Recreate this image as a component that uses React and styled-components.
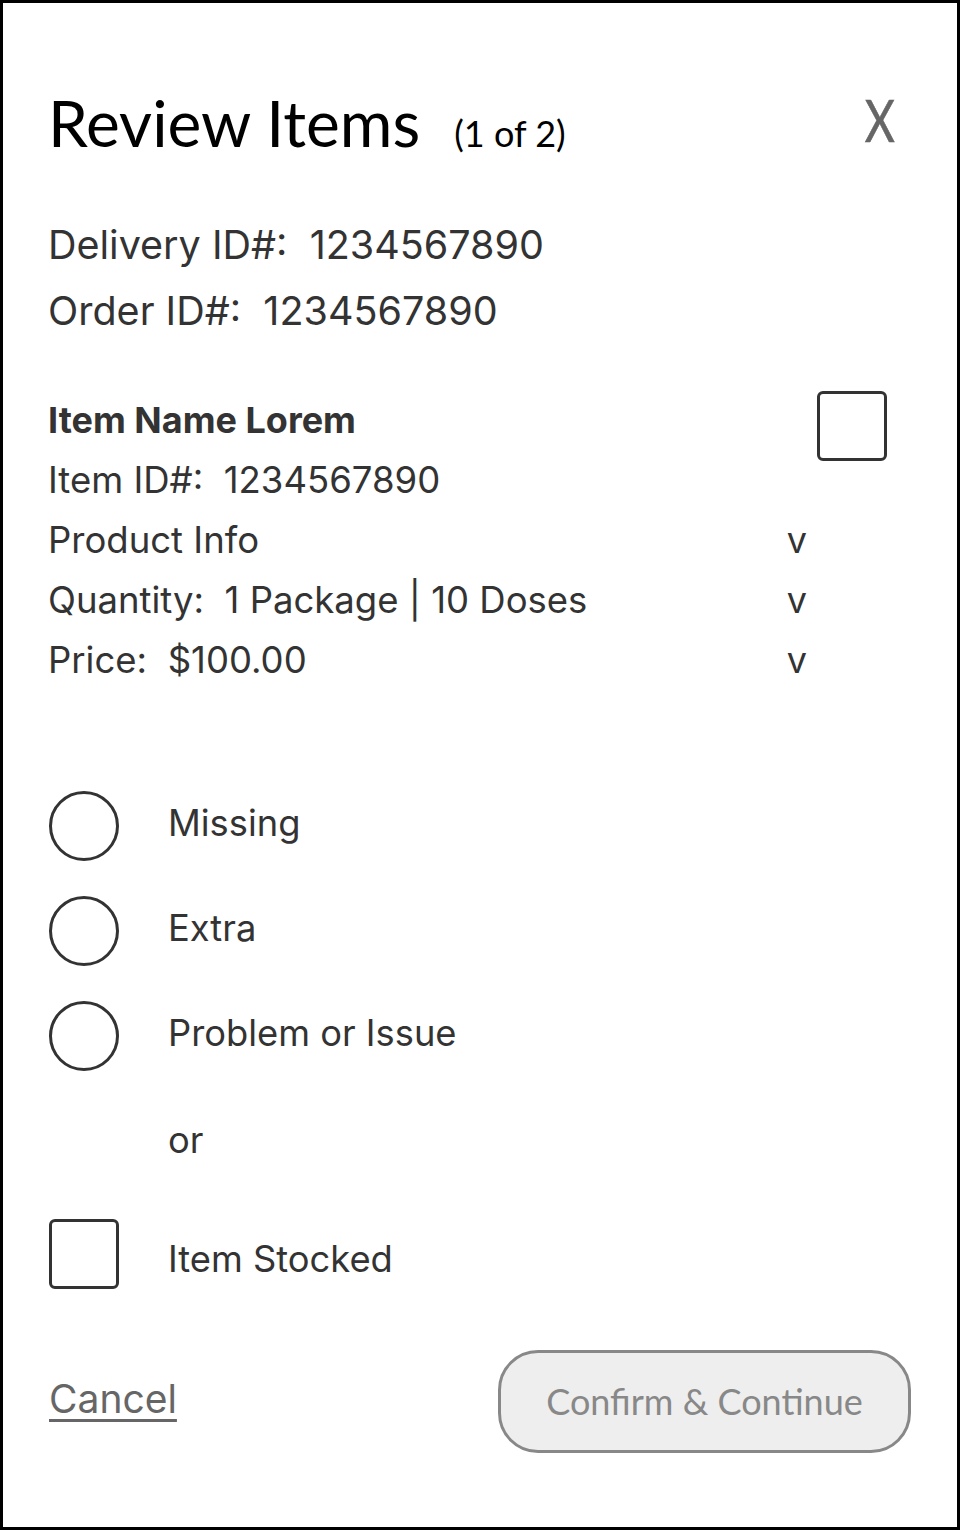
import React from "react";
import styled, { createGlobalStyle } from "styled-components";

const details = [
	{ label: "Item ID#:  1234567890" },
	{ label: "Product Info", toggle: true },
	{ label: "Quantity:  1 Package | 10 Doses", toggle: true },
	{ label: "Price:  $100.00", toggle: true },
];

const options = ["Missing", "Extra", "Problem or Issue"];

export default function App() {
	return (
		<>
			<GlobalStyle />
			<Page>
				<Header>
					<TitleGroup>
						<Title>Review Items</Title>
						<Counter>(1 of 2)</Counter>
					</TitleGroup>
					<Close>X</Close>
				</Header>

				<IdList>
					<IdLine>Delivery ID#:  1234567890</IdLine>
					<IdLine>Order ID#:  1234567890</IdLine>
				</IdList>

				<ItemSection>
					<DetailList>
						<DetailRow>
							<ItemName>Item Name Lorem</ItemName>
						</DetailRow>
						{details.map((d) => (
							<DetailRow key={d.label}>
								<span>{d.label}</span>
								{d.toggle && <Chevron>v</Chevron>}
							</DetailRow>
						))}
					</DetailList>
					<Checkbox $top />
				</ItemSection>

				<OptionList>
					{options.map((o) => (
						<OptionRow key={o}>
							<Radio />
							<OptionLabel $shift={-3}>{o}</OptionLabel>
						</OptionRow>
					))}
					<OrRow>
						<OptionLabel>or</OptionLabel>
					</OrRow>
					<OptionRow>
						<Checkbox />
						<OptionLabel $shift={5}>Item Stocked</OptionLabel>
					</OptionRow>
				</OptionList>

				<Footer>
					<CancelLink>Cancel</CancelLink>
					<ConfirmButton>Confirm &amp; Continue</ConfirmButton>
				</Footer>
			</Page>
		</>
	);
}

const GlobalStyle = createGlobalStyle`
	* {
		box-sizing: border-box;
	}
	body {
		margin: 0;
		background: #fff;
	}
`;

const Page = styled.div`
	width: 960px;
	height: 1530px;
	border: 3px solid #000;
	padding: 90px 46px 0 46px;
	display: flex;
	flex-direction: column;
	font-family: Inter, "Noto Sans", sans-serif;
	color: #333;
`;

const Header = styled.div`
	display: flex;
	justify-content: space-between;
	align-items: flex-start;
`;
const TitleGroup = styled.div`
	display: flex;
	align-items: baseline;
	font-family: Lato, "Liberation Sans", sans-serif;
	color: #000;
`;
const Title = styled.h1`
	margin: 0 0 0 -1px;
	font-size: 64px;
	font-weight: 400;
	line-height: 60px;
`;
const Counter = styled.span`
	font-size: 36px;
	margin-left: 34px;
`;
const Close = styled.span`
	font-family: Lato, "Liberation Sans", sans-serif;
	font-size: 58px;
	line-height: 60px;
	color: #666;
	margin: -3px 12px 0 0;
	display: inline-block;
	transform: scaleX(0.8);
	-webkit-text-stroke: 0.6px #666;
`;

const IdList = styled.div`
	display: flex;
	flex-direction: column;
	margin-top: 57px;
`;
const IdLine = styled.div`
	font-size: 39.5px;
	line-height: 66px;
	white-space: pre;
	margin-left: -1px;
`;

const ItemSection = styled.div`
	display: flex;
	align-items: flex-start;
	margin-top: 46px;
`;
const DetailList = styled.div`
	width: 759px;
	display: flex;
	flex-direction: column;
	margin-left: -1px;
`;
const DetailRow = styled.div`
	display: flex;
	justify-content: space-between;
	font-size: 36.5px;
	line-height: 60px;
	white-space: pre;
`;
const ItemName = styled.span`
	font-weight: 700;
	font-size: 36px;
`;
const Chevron = styled.span`
	font-size: 36px;
`;

const Checkbox = styled.div`
	width: 70px;
	height: 70px;
	border: 3px solid #333;
	border-radius: 6px;
	flex-shrink: 0;
	margin: ${(p) => (p.$top ? "1px 24px 0 auto" : "0")};
`;

const OptionList = styled.div`
	display: flex;
	flex-direction: column;
	gap: 35px;
	margin-top: 101px;
`;
const OptionRow = styled.div`
	display: flex;
	align-items: center;
	height: 70px;
`;
const OrRow = styled(OptionRow)`
	margin-top: -1px;
	margin-bottom: 9px;
`;
const Radio = styled.div`
	width: 70px;
	height: 70px;
	border: 3px solid #333;
	border-radius: 50%;
	flex-shrink: 0;
`;
const OptionLabel = styled.span`
	font-size: 36.3px;
	margin-left: 49px;
	position: relative;
	top: ${(p) => p.$shift || 0}px;
	${OrRow} > & {
		margin-left: 119px;
	}
`;

const Footer = styled.div`
	display: flex;
	justify-content: space-between;
	align-items: center;
	margin-top: 61px;
`;
const CancelLink = styled.a`
	font-family: Inter, "Noto Sans", sans-serif;
	font-size: 39px;
	color: #666;
	text-decoration: underline;
	text-decoration-thickness: 3px;
	text-underline-offset: 6px;
	margin-top: -6px;
	cursor: pointer;
`;
const ConfirmButton = styled.button`
	width: 413px;
	height: 103px;
	border: 3px solid #888;
	border-radius: 40px;
	background: #eee;
	font-family: Lato, "Liberation Sans", sans-serif;
	font-size: 36px;
	color: #888;
	padding-bottom: 2px;
	cursor: pointer;
`;
